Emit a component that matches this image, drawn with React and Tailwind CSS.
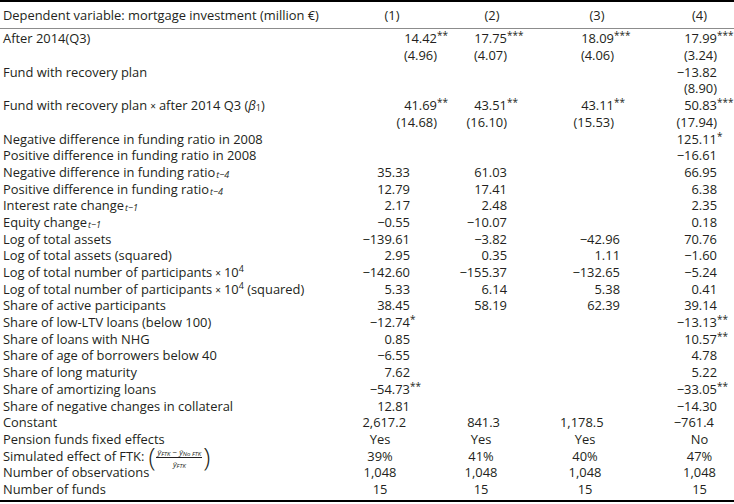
import React from "react";

const Stars = ({ s }) =>
  s ? (
    <span className="inline-block w-0 whitespace-nowrap overflow-visible text-[10px] leading-none relative -top-[4px]">
      {s}
    </span>
  ) : null;

const Sub = ({ children }) => (
  <sub className="text-[9px] italic relative top-[1px] align-baseline ml-[1px]">{children}</sub>
);

const colW = ["w-[115px]", "w-[105px]", "w-[105px]", "w-[69px]"];

const MODE = {
  top: ["pr-[18px] text-right", "pr-[53px] text-right", "pr-[51px] text-right", "pr-[17px] text-right"],
  low: ["pr-[45px] text-right", "pr-[53px] text-right", "pr-[45px] text-right", "pr-[17px] text-right"],
  con: ["pr-[49px] text-right", "pr-[60px] text-right", "pr-[65px] text-right", "pr-[20px] text-right"],
  cen: ["pr-[35px] text-center", "pr-[53px] text-center", "pr-[55px] text-center", "pr-0 text-center"],
  head: ["pr-[11px] text-center", "pr-[31px] text-center", "pr-[31px] text-center", "pr-0 text-center"],
};

const parse = (v) => {
  if (!v) return ["", ""];
  const m = v.match(/^(.*?)(\**)$/);
  return [m[1], m[2]];
};

const Cell = ({ v, i, mode }) => {
  const [n, s] = parse(v);
  return (
    <div className={`${colW[i]} ${MODE[mode][i]} shrink-0 whitespace-nowrap`}>
      {n}
      <Stars s={s} />
    </div>
  );
};

const Row = ({ label, vals = [], mode = "low" }) => (
  <div className="flex h-[16.7px] items-center">
    <div className="w-[340px] shrink-0 pl-[3px] whitespace-nowrap">{label}</div>
    {[0, 1, 2, 3].map((i) => (
      <Cell key={i} v={vals[i]} i={i} mode={mode} />
    ))}
  </div>
);

const yhat = (sub) => (
  <span className="italic">
    ŷ<span className="text-[6px] relative top-[1px]">{sub}</span>
  </span>
);

export default function App() {
  const t4 = <Sub>t−4</Sub>;
  const t1 = <Sub>t−1</Sub>;
  const times = <span className="text-[10px] mx-[3px]">×</span>;
  const ten4 = (
    <>
      10<sup className="text-[9px] relative -top-[5px] align-baseline">4</sup>
    </>
  );
  return (
    <div
      className="w-[734px] h-[504px] bg-white text-[#231f20] text-[12.9px] leading-none"
      style={{ fontFamily: '"Open Sans", "Noto Sans", sans-serif' }}
    >
      <div className="border-t-2 border-black h-[29px] flex items-center border-b border-b-[#8c8c8c]">
        <div className="w-[340px] shrink-0 pl-[3px] whitespace-nowrap">
          Dependent variable: mortgage investment (million €)
        </div>
        {["(1)", "(2)", "(3)", "(4)"].map((h, i) => (
          <Cell key={i} v={h} i={i} mode="head" />
        ))}
      </div>
      <div className="pt-[1.5px] pb-[2px] border-b-2 border-black">
        <Row label="After 2014(Q3)" vals={["14.42**", "17.75***", "18.09***", "17.99***"]} mode="top" />
        <Row label="" vals={["(4.96)", "(4.07)", "(4.06)", "(3.24)"]} mode="top" />
        <Row label="Fund with recovery plan" vals={["", "", "", "−13.82"]} mode="top" />
        <Row label="" vals={["", "", "", "(8.90)"]} mode="top" />
        <Row
          label={
            <>
              Fund with recovery plan{times}after 2014 Q3 (<span className="italic">β</span>
              <sub className="text-[9px] relative top-[1px] align-baseline">1</sub>)
            </>
          }
          vals={["41.69**", "43.51**", "43.11**", "50.83***"]}
          mode="top"
        />
        <Row label="" vals={["(14.68)", "(16.10)", "(15.53)", "(17.94)"]} mode="top" />
        <Row label="Negative difference in funding ratio in 2008" vals={["", "", "", "125.11*"]} />
        <Row label="Positive difference in funding ratio in 2008" vals={["", "", "", "−16.61"]} />
        <Row label={<>Negative difference in funding ratio{t4}</>} vals={["35.33", "61.03", "", "66.95"]} />
        <Row label={<>Positive difference in funding ratio{t4}</>} vals={["12.79", "17.41", "", "6.38"]} />
        <Row label={<>Interest rate change{t1}</>} vals={["2.17", "2.48", "", "2.35"]} />
        <Row label={<>Equity change{t1}</>} vals={["−0.55", "−10.07", "", "0.18"]} />
        <Row label="Log of total assets" vals={["−139.61", "−3.82", "−42.96", "70.76"]} />
        <Row label="Log of total assets (squared)" vals={["2.95", "0.35", "1.11", "−1.60"]} />
        <Row
          label={<>Log of total number of participants{times}{ten4}</>}
          vals={["−142.60", "−155.37", "−132.65", "−5.24"]}
        />
        <Row
          label={<>Log of total number of participants{times}{ten4} (squared)</>}
          vals={["5.33", "6.14", "5.38", "0.41"]}
        />
        <Row label="Share of active participants" vals={["38.45", "58.19", "62.39", "39.14"]} />
        <Row label="Share of low-LTV loans (below 100)" vals={["−12.74*", "", "", "−13.13**"]} />
        <Row label="Share of loans with NHG" vals={["0.85", "", "", "10.57**"]} />
        <Row label="Share of age of borrowers below 40" vals={["−6.55", "", "", "4.78"]} />
        <Row label="Share of long maturity" vals={["7.62", "", "", "5.22"]} />
        <Row label="Share of amortizing loans" vals={["−54.73**", "", "", "−33.05**"]} />
        <Row label="Share of negative changes in collateral" vals={["12.81", "", "", "−14.30"]} />
        <Row label="Constant" vals={["2,617.2", "841.3", "1,178.5", "−761.4"]} mode="con" />
        <Row label="Pension funds fixed effects" vals={["Yes", "Yes", "Yes", "No"]} mode="cen" />
        <Row
          label={
            <span className="inline-flex items-center">
              Simulated effect of FTK:
              <span className="inline-flex items-center ml-[4px] relative top-[2px]">
                <span className="text-[26px] font-light leading-none relative -top-[2px]">(</span>
                <span className="inline-flex flex-col items-center text-[8px] leading-none mx-[1px]">
                  <span className="px-[1px] pb-[1px] border-b border-[#231f20] whitespace-nowrap">
                    {yhat("FTK")} − {yhat("No FTK")}
                  </span>
                  <span className="pt-[2px]">{yhat("FTK")}</span>
                </span>
                <span className="text-[26px] font-light leading-none relative -top-[2px]">)</span>
              </span>
            </span>
          }
          vals={["39%", "41%", "40%", "47%"]}
          mode="cen"
        />
        <Row label="Number of observations" vals={["1,048", "1,048", "1,048", "1,048"]} mode="cen" />
        <Row label="Number of funds" vals={["15", "15", "15", "15"]} mode="cen" />
      </div>
    </div>
  );
}
